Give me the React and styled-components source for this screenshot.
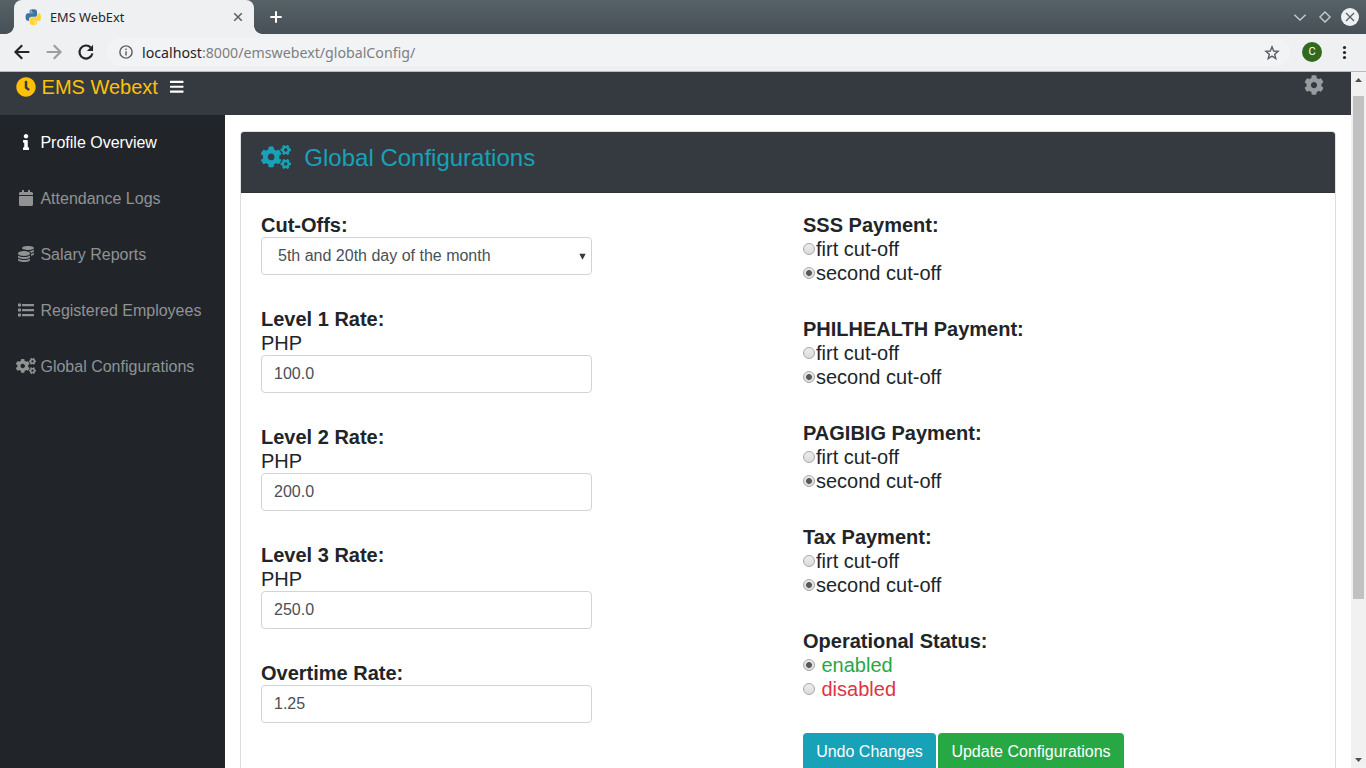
import React from 'react';
import styled, { createGlobalStyle } from 'styled-components';
import {
  FaClock, FaBars, FaCog, FaInfo, FaCalendar, FaCoins, FaCogs,
} from 'react-icons/fa';

const Global = createGlobalStyle`
  *, *::before, *::after { box-sizing: border-box; }
  body { margin: 0; background: #fff; overflow: hidden; }
`;

const Window = styled.div`
  width: 1366px;
  height: 768px;
  overflow: hidden;
  display: flex;
  flex-direction: column;
  font-family: 'Liberation Sans', Arial, sans-serif;
  color: #212529;
`;

const TabStrip = styled.div`
  flex: none;
  height: 34px;
  display: flex;
  align-items: center;
  padding: 0 7px 0 14px;
  background: linear-gradient(#566168, #475057);
  font-family: 'Noto Sans', sans-serif;
`;

const Tab = styled.div`
  position: relative;
  width: 240px;
  height: 34px;
  display: flex;
  align-items: center;
  padding: 0 11px;
  border-radius: 8px 8px 0 0;
  background: #eff0f1;
  font-size: 12.8px;
  color: #232629;
  &::before, &::after {
    content: '';
    position: absolute;
    bottom: 0;
    width: 8px;
    height: 8px;
  }
  &::before { left: -8px; background: radial-gradient(circle at 0 0, transparent 7.5px, #eff0f1 8px); }
  &::after { right: -8px; background: radial-gradient(circle at 100% 0, transparent 7.5px, #eff0f1 8px); }
`;

const TabTitle = styled.span`
  flex: 1;
  margin-left: 9px;
`;

const StripSpacer = styled.div`
  flex: 1;
  display: flex;
  padding-left: 15px;
`;

const WindowControls = styled.div`
  display: flex;
  align-items: center;
  gap: 7px;
`;

const Toolbar = styled.div`
  flex: none;
  height: 38px;
  display: flex;
  align-items: center;
  padding: 0 13px 1px 13px;
  background: #eff0f1;
  border-bottom: 1px solid #b9bbbd;
`;

const NavButtons = styled.div`
  display: flex;
  gap: 14px;
`;

const AddressBar = styled.div`
  flex: 1;
  height: 28px;
  margin: 0 12px 0 12px;
  padding: 0 10px 0 12px;
  border-radius: 14px;
  background: #f2f3f4;
  display: flex;
  align-items: center;
`;

const Url = styled.span`
  flex: 1;
  margin-left: 9px;
  font: 14.2px 'Noto Sans', sans-serif;
  color: #7c8083;
`;

const Host = styled.span`
  color: #232629;
`;

const Avatar = styled.span`
  width: 20px;
  height: 20px;
  margin-right: 13px;
  border-radius: 50%;
  background: #33691e;
  color: #fff;
  font: 11px/20px Roboto, sans-serif;
  text-align: center;
`;

const Viewport = styled.div`
  flex: 1;
  min-height: 0;
  display: flex;
`;

const Page = styled.div`
  flex: 1;
  min-width: 0;
  display: flex;
  flex-direction: column;
`;

const Navbar = styled.header`
  flex: none;
  height: 43px;
  display: flex;
  align-items: flex-start;
  padding: 0 27.5px 0 16px;
  background: #343a40;
  color: #ffc107;
  font-size: 20px;
  line-height: 30px;
`;

const Glyph = styled.span`
  display: inline-flex;
  justify-content: center;
  width: ${({ $w }) => $w};
  vertical-align: -0.125em;
  & > svg { display: block; flex: none; width: ${({ $wide }) => ($wide ? '1.25em' : '1em')}; height: 1em; }
`;

const MenuToggle = styled.span`
  margin-left: 12px;
  padding-top: 1px;
  font-size: 15.5px;
  color: #fff;
`;

const SettingsLink = styled.span`
  margin-left: auto;
  display: flex;
  padding-top: 3px;
  color: #999c9f;
`;

const Columns = styled.div`
  flex: 1;
  min-height: 0;
  display: flex;
`;

const Sidebar = styled.nav`
  flex: none;
  width: 225px;
  background: #212529;
`;

const NavItem = styled.div`
  padding: 16px;
  font-size: 16px;
  line-height: 24px;
  white-space: nowrap;
  color: ${({ $active }) => ($active ? '#fff' : '#909294')};
`;

const NavText = styled.span`
  display: inline-block;
  margin-left: 4.45px;
`;

const Main = styled.main`
  flex: 1;
  min-width: 0;
  padding: 16px 15px 0;
`;

const Card = styled.section`
  height: 760px;
  border: 1px solid #dfdfdf;
  border-radius: 4px;
`;

const CardHeader = styled.div`
  height: 61px;
  padding: 12px 20px;
  border-bottom: 1px solid #2e3439;
  border-radius: 3px 3px 0 0;
  background: #343a40;
  color: #17a2b8;
  font-size: 24px;
  line-height: 28.8px;
  white-space: pre;
`;

const CardBody = styled.div`
  display: grid;
  grid-template-columns: 1fr 1fr;
  column-gap: 30px;
  padding: 20px;
  font-size: 20px;
  line-height: 24px;
`;

const Column = styled.div`
  width: ${({ $w }) => $w};
  display: flex;
  flex-direction: column;
  gap: 32px;
`;

const Label = styled.div`
  font-weight: 700;
`;

const Control = styled.div`
  height: 38px;
  display: flex;
  align-items: center;
  justify-content: space-between;
  padding: 0 ${({ $select }) => ($select ? '5px 0 16px' : '12px')};
  border: 1px solid #ced4da;
  border-radius: 4px;
  color: #495057;
  font-size: 16px;
`;

const Option = styled.div`
  display: flex;
  align-items: center;
  gap: ${({ $gap }) => $gap || '1px'};
  color: ${({ $color }) => $color || 'inherit'};
`;

const Radio = styled.span`
  width: 12px;
  height: 12px;
  border: 1px solid #a8a8a8;
  border-radius: 50%;
  background: ${({ $on }) => ($on ? 'radial-gradient(circle, #5a5a5a 2.6px, transparent 3.3px), ' : '')}linear-gradient(#ececec, #dcdcdc);
`;

const Buttons = styled.div`
  display: flex;
  gap: 2px;
`;

const Button = styled.div`
  width: ${({ $w }) => $w};
  height: 38px;
  padding: 7px 0;
  border-radius: 4px;
  background: ${({ $bg }) => $bg};
  color: #fff;
  font-size: 16px;
  line-height: 24px;
  text-align: center;
  white-space: nowrap;
`;

const Scrollbar = styled.div`
  flex: none;
  width: 15px;
  display: flex;
  flex-direction: column;
  align-items: center;
  justify-content: space-between;
  padding: 6px 0;
  background: #f1f1f1;
`;

const Thumb = styled.div`
  width: 11px;
  height: 503px;
  margin: 14px 0 auto;
  background: #c1c1c1;
`;

const PythonLogo = () => (
  <svg width="16" height="16" viewBox="-4 -2 115 115">
    <path fill="#3b74a5" d="M54.900 0C50.300 0 46 .4 42.100 1.100 30.800 3.100 28.700 7.300 28.700 15v10.300h26.800v3.400H18.600C10.800 28.700 4 33.300 1.900 42.300c-2.500 10.200-2.600 16.500 0 27.200C3.800 77.400 8.300 83.100 16.100 83.100h9.300V70.800c0-8.800 7.600-16.600 16.700-16.600h26.800c7.400 0 13.400-6.100 13.400-13.600V15c0-7.200-6.100-12.700-13.400-13.900C64.300.3 59.500 0 54.900 0z" />
    <circle cx="40.400" cy="13.300" r="5" fill="#eff0f1" />
    <path fill="#ffd43b" d="M85.600 28.700v11.900c0 9.200-7.800 17-16.700 17H42.100c-7.300 0-13.400 6.200-13.400 13.600v25.500c0 7.300 6.300 11.600 13.400 13.700 8.500 2.400 16.600 2.900 26.800 0 6.700-2 13.400-5.900 13.400-13.700V86.500H55.500v-3.400h40.200c7.800 0 10.700-5.400 13.400-13.600 2.800-8.400 2.700-16.500 0-27.200-1.900-7.800-5.600-13.600-13.400-13.600z" />
    <circle cx="70.600" cy="98.400" r="5" fill="#eff0f1" />
  </svg>
);

const ListIcon = () => (
  <svg viewBox="0 0 512 512" fill="currentColor">
    {[48, 208, 368].map((y) => (
      <React.Fragment key={y}>
        <rect x="0" y={y} width="96" height="96" rx="12" />
        <rect x="128" y={y + 12} width="384" height="72" rx="14" />
      </React.Fragment>
    ))}
  </svg>
);

const Stroke = ({ d, size = 16, color = '#232629', w = 2, children }) => (
  <svg width={size} height={size} viewBox="0 0 16 16" fill="none" stroke={color} strokeWidth={w}>
    {d && <path d={d} />}
    {children}
  </svg>
);

const NAV = [
  ['Profile Overview', FaInfo],
  ['Attendance Logs', FaCalendar],
  ['Salary Reports', FaCoins],
  ['Registered Employees', ListIcon],
  ['Global Configurations', FaCogs],
];

const RATES = [
  ['Level 1 Rate:', 'PHP', '100.0'],
  ['Level 2 Rate:', 'PHP', '200.0'],
  ['Level 3 Rate:', 'PHP', '250.0'],
  ['Overtime Rate:', null, '1.25'],
];

const PAYMENTS = ['SSS Payment:', 'PHILHEALTH Payment:', 'PAGIBIG Payment:', 'Tax Payment:'];

const Chrome = () => (
  <>
    <TabStrip>
      <Tab>
        <PythonLogo />
        <TabTitle>EMS WebExt</TabTitle>
        <Stroke size={10} color="#5a5d60" w={2.4} d="M2 2l12 12M14 2L2 14" />
      </Tab>
      <StripSpacer>
        <Stroke size={14} color="#fff" w={2.300} d="M8 1.500v13M1.500 8h13" />
      </StripSpacer>
      <WindowControls>
        <Stroke size={18} color="#c8ccce" w={1.200} d="M3 6l5 4.700L13 6" />
        <Stroke size={18} color="#c8ccce" w={1.200} d="M8 3.500L12.500 8 8 12.500 3.500 8z" />
        <svg width="18" height="18" viewBox="0 0 18 18">
          <circle cx="9" cy="9" r="9" fill="#eff0f1" />
          <path d="M5 5l8 8M13 5l-8 8" stroke="#545d64" strokeWidth="1.200" />
        </svg>
      </WindowControls>
    </TabStrip>
    <Toolbar>
      <NavButtons>
        <Stroke size={18} w={1.900} d="M14.500 8H2.500M8.200 2L2.200 8l6 6" />
        <Stroke size={18} w={1.900} color="#9b9d9f" d="M1.500 8h12M7.800 2l6 6-6 6" />
        <Stroke size={18} w={1.900} d="M13.700 9.200A5.800 5.800 0 1 1 12.200 4">
          <path d="M14.300 1.500v5.500H8.800z" fill="#232629" stroke="none" />
        </Stroke>
      </NavButtons>
      <AddressBar>
        <Stroke size={14} color="#5f6368" w={1.700}>
          <circle cx="8" cy="8" r="7" />
          <path d="M8 7v5M8 4v1.800" />
        </Stroke>
        <Url><Host>localhost</Host>:8000/emswebext/globalConfig/</Url>
        <Stroke size={16} color="#5a5d60" w={1.400} d="M8 2.800l1.700 4.200 4.400.3-3.400 2.900 1.100 4.400L8 12.200l-3.800 2.400 1.100-4.400L1.900 7.300l4.400-.3z" />
      </AddressBar>
      <Avatar>C</Avatar>
      <svg width="18" height="18" viewBox="0 0 18 18" fill="#232629">
        <circle cx="9.500" cy="4.500" r="1.600" />
        <circle cx="9.500" cy="9.500" r="1.600" />
        <circle cx="9.500" cy="14.500" r="1.600" />
      </svg>
    </Toolbar>
  </>
);

export default function App() {
  return (
    <Window>
      <Global />
      <Chrome />
      <Viewport>
        <Page>
          <Navbar>
            <span><Glyph $w="20px"><FaClock /></Glyph> EMS Webext</span>
            <MenuToggle><Glyph $w="14px"><FaBars /></Glyph></MenuToggle>
            <SettingsLink><FaCog /></SettingsLink>
          </Navbar>
          <Columns>
            <Sidebar>
              {NAV.map(([text, Icon], i) => (
                <NavItem key={text} $active={i === 0}>
                  <Glyph $w="20px" $wide={Icon === FaCogs}><Icon /></Glyph>
                  <NavText>{text}</NavText>
                </NavItem>
              ))}
            </Sidebar>
            <Main>
              <Card>
                <CardHeader>
                  <Glyph $w="30px" $wide><FaCogs /></Glyph>{'  Global Configurations'}
                </CardHeader>
                <CardBody>
                  <Column $w="331px">
                    <div>
                      <Label>Cut-Offs:</Label>
                      <Control $select>
                        5th and 20th day of the month
                        <svg width="7" height="7" viewBox="0 0 7 7"><path d="M.3 .7h6.400L3.500 6.700z" fill="#343a40" /></svg>
                      </Control>
                    </div>
                    {RATES.map(([label, unit, value]) => (
                      <div key={label}>
                        <Label>{label}</Label>
                        {unit && <div>{unit}</div>}
                        <Control>{value}</Control>
                      </div>
                    ))}
                  </Column>
                  <Column>
                    {PAYMENTS.map((label) => (
                      <div key={label}>
                        <Label>{label}</Label>
                        <Option><Radio />firt cut-off</Option>
                        <Option><Radio $on />second cut-off</Option>
                      </div>
                    ))}
                    <div>
                      <Label>Operational Status:</Label>
                      <Option $gap="6.5px" $color="#28a745"><Radio $on />enabled</Option>
                      <Option $gap="6.5px" $color="#dc3545"><Radio />disabled</Option>
                    </div>
                    <Buttons>
                      <Button $bg="#17a2b8" $w="133px">Undo Changes</Button>
                      <Button $bg="#28a745" $w="186px">Update Configurations</Button>
                    </Buttons>
                  </Column>
                </CardBody>
              </Card>
            </Main>
          </Columns>
        </Page>
        <Scrollbar>
          <svg width="7" height="4" viewBox="0 0 7 4"><path d="M0 4L3.500 0 7 4z" fill="#505050" /></svg>
          <Thumb />
          <svg width="7" height="4" viewBox="0 0 7 4"><path d="M0 0h7L3.500 4z" fill="#505050" /></svg>
        </Scrollbar>
      </Viewport>
    </Window>
  );
}
